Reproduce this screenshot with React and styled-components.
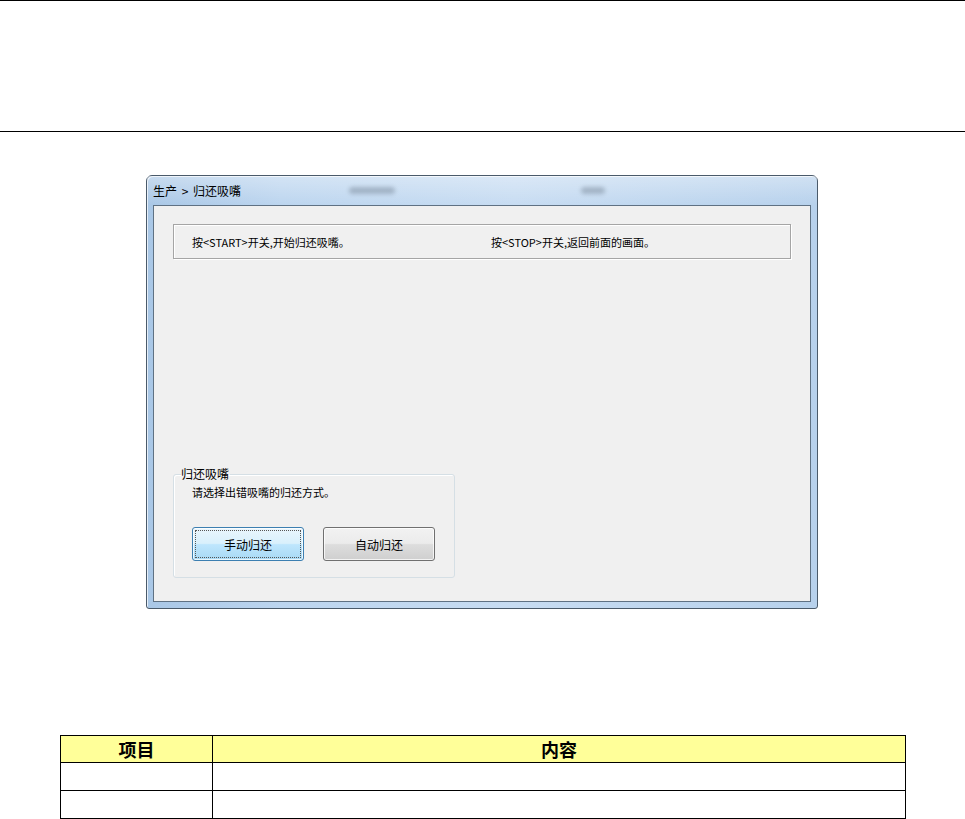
import styled, { createGlobalStyle } from "styled-components";

const GlobalStyle = createGlobalStyle`
  html, body {
    margin: 0;
    padding: 0;
    background: #ffffff;
  }
  body {
    font-family: "Noto Sans CJK SC", "Liberation Sans", sans-serif;
    color: #000;
  }
`;

const Page = styled.div`
  width: 965px;
  min-height: 819px;
  overflow: hidden;
`;

// blank header band between two rules
const HeaderBand = styled.div`
  height: 130px;
  border-top: 1px solid #000;
  border-bottom: 1px solid #000;
`;

const Window = styled.div`
  margin: 43px 0 0 146px;
  width: 672px;
  height: 434px;
  box-sizing: border-box;
  border: 1px solid #4a5a6a;
  border-radius: 6px 6px 3px 3px;
  background: linear-gradient(90deg, #a9c7e6 0%, #bcd5ef 20%, #c7dcf2 55%, #b7d1ec 100%);
  display: flex;
  flex-direction: column;
  padding: 0 6px 6px 6px;
  box-shadow: inset 1px 1px 0 rgba(255, 255, 255, 0.7);
`;

const TitleBar = styled.div`
  height: 29px;
  display: flex;
  align-items: center;
  font-size: 12px;
  background: linear-gradient(180deg, rgba(255, 255, 255, 0.35), rgba(255, 255, 255, 0));
  margin: 0 -6px;
  padding: 0 6px;
`;

const TitleText = styled.span`
  width: 196px;
  line-height: 1;
  word-spacing: 2px;
`;

const Smudge = styled.span`
  width: ${({ w }) => w}px;
  height: 7px;
  margin-left: ${({ ml }) => ml}px;
  background: #6f7f90;
  opacity: 0.45;
  filter: blur(2px);
  border-radius: 4px;
`;

const Client = styled.div`
  flex: 1;
  border: 1px solid #5f7183;
  background: #f0f0f0;
  display: flex;
  flex-direction: column;
  padding: 18px 19px 23px 19px;
`;

const MessageBox = styled.div`
  height: 35px;
  box-sizing: border-box;
  border: 1px solid #a5a5a5;
  box-shadow: inset 1px 1px 0 #ffffff, 1px 1px 0 #ffffff;
  display: grid;
  grid-template-columns: 299px 1fr;
  align-items: center;
  padding-left: 18px;
  font-size: 11px;
`;

const Spacer = styled.div`
  flex: 1;
`;

const GroupBox = styled.fieldset`
  width: 282px;
  height: 111px;
  box-sizing: border-box;
  margin: 0;
  padding: 4px 0 0 18px;
  border: 1px solid #d5dfe5;
  border-radius: 3px;
  box-shadow: inset 1px 1px 0 #ffffff;
`;

const Legend = styled.legend`
  font-size: 12px;
  padding: 0 1px 0 0;
  margin-left: -11px;
  line-height: 14px;
`;

const Prompt = styled.div`
  font-size: 11px;
  line-height: 14px;
`;

const ButtonRow = styled.div`
  display: flex;
  gap: 19px;
  margin-top: 28px;
`;

const Button = styled.button`
  width: 112px;
  height: 34px;
  box-sizing: border-box;
  font-family: "Noto Sans CJK SC", "Liberation Sans", sans-serif;
  font-size: 12px;
  color: #000;
  border-radius: 3px;
  padding: 0;
  border: 1px solid ${({ active }) => (active ? "#3c7fb1" : "#707070")};
  background: ${({ active }) =>
    active
      ? "linear-gradient(180deg, #eaf6fd 0%, #d9f0fc 48%, #bee6fd 52%, #a7d9f5 100%)"
      : "linear-gradient(180deg, #f2f2f2 0%, #ebebeb 48%, #dddddd 52%, #cfcfcf 100%)"};
  box-shadow: inset 0 0 0 1px rgba(255, 255, 255, 0.75);
  outline: ${({ active }) => (active ? "1px dotted #555" : "none")};
  outline-offset: -4px;
`;

const Table = styled.table`
  margin: 126px 0 0 60px;
  width: 846px;
  border-collapse: collapse;
  table-layout: fixed;
`;

const HeadCell = styled.th`
  background: #ffff99;
  border: 1px solid #000;
  height: 26px;
  padding: 0;
  font-size: 18px;
  font-weight: 700;
  line-height: 1;
  text-align: center;
  width: ${({ w }) => (w ? `${w}px` : "auto")};
`;

const Cell = styled.td`
  border: 1px solid #000;
  height: 27px;
  padding: 0;
`;

export default function App() {
  return (
    <Page>
      <GlobalStyle />
      <HeaderBand />
      <Window>
        <TitleBar>
          <TitleText>生产 &gt; 归还吸嘴</TitleText>
          <Smudge w={46} ml={0} />
          <Smudge w={24} ml={186} />
        </TitleBar>
        <Client>
          <MessageBox>
            <span>按&lt;START&gt;开关,开始归还吸嘴。</span>
            <span>按&lt;STOP&gt;开关,返回前面的画面。</span>
          </MessageBox>
          <Spacer />
          <GroupBox>
            <Legend>归还吸嘴</Legend>
            <Prompt>请选择出错吸嘴的归还方式。</Prompt>
            <ButtonRow>
              <Button active>手动归还</Button>
              <Button>自动归还</Button>
            </ButtonRow>
          </GroupBox>
        </Client>
      </Window>
      <Table>
        <thead>
          <tr>
            <HeadCell w={151}>项目</HeadCell>
            <HeadCell>内容</HeadCell>
          </tr>
        </thead>
        <tbody>
          <tr>
            <Cell />
            <Cell />
          </tr>
          <tr>
            <Cell />
            <Cell />
          </tr>
        </tbody>
      </Table>
    </Page>
  );
}
